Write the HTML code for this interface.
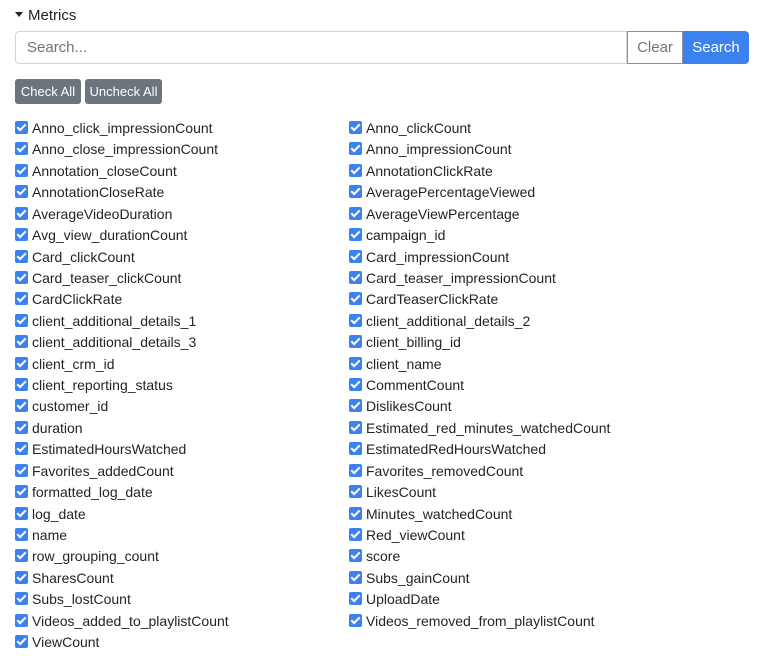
<!DOCTYPE html>
<html><head><style>
body{margin:0;background:#fff;font-family:"Liberation Sans",sans-serif;color:#212529;width:759px;height:656px;overflow:hidden;position:relative}
.t{position:absolute;left:15px;top:7px;font-size:15px}
.t:before{content:"";display:inline-block;border-left:4px solid transparent;border-right:4px solid transparent;border-top:5px solid #212529;margin-right:5px;vertical-align:3px}
.in{position:absolute;left:15px;top:31px;border:1px solid #ced4da;border-radius:4px 0 0 4px;font-size:15px;color:#6c757d;line-height:31px;padding-left:11px;box-sizing:border-box;width:612px;height:33px}
.cl{position:absolute;left:627px;top:31px;width:56px;height:33px;border:1px solid #8a9299;box-sizing:border-box;font-size:15px;color:#6c757d;text-align:center;line-height:31px}
.se{position:absolute;left:683px;top:31px;width:66px;height:33px;background:#3b82f0;color:#fff;border-radius:0 4px 4px 0;font-size:15px;text-align:center;line-height:33px}
.b{position:absolute;top:79px;height:25px;background:#6c757d;color:#fff;font-size:13px;line-height:25px;text-align:center;border-radius:3px}
.r{position:absolute;font-size:14px;height:18px;line-height:18px;white-space:nowrap}
.r i{position:absolute;left:-17px;top:2px;width:13px;height:13px;background:#3b82f0;border-radius:2px}
.r i:after{content:"";position:absolute;left:4px;top:1px;width:3px;height:7px;border:solid #fff;border-width:0 2px 2px 0;transform:rotate(45deg)}
</style></head><body>
<div class="t">Metrics</div>
<div class="in">Search...</div>
<div class="cl">Clear</div>
<div class="se">Search</div>
<div class="b" style="left:15px;width:66px">Check All</div>
<div class="b" style="left:85px;width:77px">Uncheck All</div>
<div id="l"></div>
<script>
var L=["Anno_click_impressionCount","Anno_close_impressionCount","Annotation_closeCount","AnnotationCloseRate","AverageVideoDuration","Avg_view_durationCount","Card_clickCount","Card_teaser_clickCount","CardClickRate","client_additional_details_1","client_additional_details_3","client_crm_id","client_reporting_status","customer_id","duration","EstimatedHoursWatched","Favorites_addedCount","formatted_log_date","log_date","name","row_grouping_count","SharesCount","Subs_lostCount","Videos_added_to_playlistCount","ViewCount"];
var R=["Anno_clickCount","Anno_impressionCount","AnnotationClickRate","AveragePercentageViewed","AverageViewPercentage","campaign_id","Card_impressionCount","Card_teaser_impressionCount","CardTeaserClickRate","client_additional_details_2","client_billing_id","client_name","CommentCount","DislikesCount","Estimated_red_minutes_watchedCount","EstimatedRedHoursWatched","Favorites_removedCount","LikesCount","Minutes_watchedCount","Red_viewCount","score","Subs_gainCount","UploadDate","Videos_removed_from_playlistCount"];
var h="";
L.forEach(function(s,i){h+='<div class="r" style="left:32px;top:'+(119+i*21.42)+'px"><i></i>'+s+'</div>'});
R.forEach(function(s,i){h+='<div class="r" style="left:366px;top:'+(119+i*21.42)+'px"><i></i>'+s+'</div>'});
document.getElementById("l").innerHTML=h;
</script>
</body></html>
